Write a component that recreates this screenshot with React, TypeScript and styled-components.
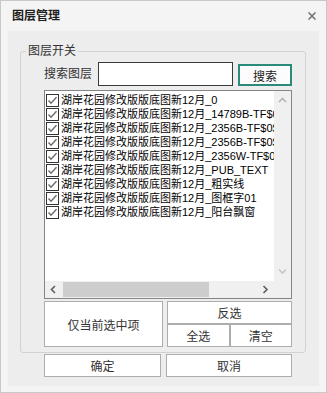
import styled, { createGlobalStyle } from "styled-components";

const GlobalStyle = createGlobalStyle`
  html, body {
    margin: 0;
    padding: 0;
    background: #ffffff;
  }
  body {
    font-family: "Liberation Sans", "Noto Sans CJK SC", sans-serif;
  }
  * {
    box-sizing: border-box;
  }
`;

const PREFIX = "湖岸花园修改版版底图新12月";

const layers = [
  "_0",
  "_14789B-TF$0$0",
  "_2356B-TF$0$1",
  "_2356B-TF$0$2",
  "_2356W-TF$0$3",
  "_PUB_TEXT",
  "_粗实线",
  "_图框字01",
  "_阳台飘窗",
];

const CheckIcon = () => (
  <CheckBox width="13" height="13" viewBox="0 0 13 13">
    <rect x="0.5" y="0.5" width="12" height="12" fill="#fff" stroke="#333" />
    <polyline
      points="2.5,6.5 5,9.2 10.5,3.2"
      fill="none"
      stroke="#6a6a6a"
      strokeWidth="1.4"
    />
  </CheckBox>
);

const Chevron = ({ dir, color }: { dir: "up" | "down" | "left" | "right"; color: string }) => {
  const pts = {
    up: "1,5 4.5,1.5 8,5",
    down: "1,1.5 4.5,5 8,1.5",
    left: "5,1 1.5,4.5 5,8",
    right: "1.5,1 5,4.5 1.5,8",
  }[dir];
  const vertical = dir === "up" || dir === "down";
  return (
    <svg width={vertical ? 9 : 7} height={vertical ? 7 : 9} viewBox={vertical ? "0 0 9 7" : "0 0 7 9"}>
      <polyline points={pts} fill="none" stroke={color} strokeWidth="1.6" />
    </svg>
  );
};

const App = () => {
  return (
    <>
      <GlobalStyle />
      <Window>
        <TitleBar>
          <Title>图层管理</Title>
          <svg width="8" height="8" viewBox="0 0 8 8">
            <path d="M0.5 0.5 L7.5 7.5 M7.5 0.5 L0.5 7.5" stroke="#6f6f6f" strokeWidth="1.5" />
          </svg>
        </TitleBar>
        <Body>
          <GroupBox>
            <Legend>图层开关</Legend>
            <SearchRow>
              <SearchLabel>搜索图层</SearchLabel>
              <SearchInput />
              <SearchButton>搜索</SearchButton>
            </SearchRow>
            <ListBox>
              <Items>
                {layers.map((suffix, i) => (
                  <Item key={i}>
                    <CheckIcon />
                    <ItemText>
                      {PREFIX}
                      {suffix}
                    </ItemText>
                  </Item>
                ))}
              </Items>
              <VScroll>
                <Chevron dir="up" color="#b5b5b5" />
                <Chevron dir="down" color="#c6c6c6" />
              </VScroll>
              <HScroll>
                <ArrowCell>
                  <Chevron dir="left" color="#5e5e5e" />
                </ArrowCell>
                <Track>
                  <Thumb style={{ width: 146 }} />
                </Track>
                <ArrowCell>
                  <Chevron dir="right" color="#5e5e5e" />
                </ArrowCell>
              </HScroll>
              <Corner />
            </ListBox>
            <ActionGrid>
              <Button>仅当前选中项</Button>
              <SelectGrid>
                <Button $span>反选</Button>
                <Button>全选</Button>
                <Button>清空</Button>
              </SelectGrid>
            </ActionGrid>
          </GroupBox>
          <DialogButtons>
            <Button>确定</Button>
            <Button>取消</Button>
          </DialogButtons>
        </Body>
      </Window>
    </>
  );
};

export default App;

const Window = styled.div`
  width: 327px;
  height: 393px;
  border: 1px solid #c8c8c8;
  background: #f4f4f4;
  display: flex;
  flex-direction: column;
`;

const TitleBar = styled.div`
  height: 30px;
  flex-shrink: 0;
  display: flex;
  align-items: center;
  justify-content: space-between;
  padding: 0 10px 0 11px;
`;

const Title = styled.div`
  font-size: 12px;
  font-weight: bold;
  color: #1e1e1e;
  line-height: 14px;
`;

const Body = styled.div`
  flex: 1;
  margin: 0 7px 6px 7px;
  background: #ededed;
  padding: 20px 13px 8px 12px;
  display: flex;
  flex-direction: column;
`;

const GroupBox = styled.div`
  position: relative;
  width: 286px;
  border: 1px solid #d2d2d2;
  border-radius: 3px;
  padding: 10px 13px 5px 23px;
  display: flex;
  flex-direction: column;
`;

const Legend = styled.span`
  position: absolute;
  top: -8px;
  left: 5px;
  padding: 0 2px;
  background: #ededed;
  font-size: 12px;
  line-height: 14px;
  color: #333;
`;

const SearchRow = styled.div`
  height: 24px;
  display: flex;
  align-items: flex-end;
`;

const SearchLabel = styled.span`
  align-self: center;
  width: 48px;
  margin-right: 6px;
  font-size: 12px;
  line-height: 14px;
  color: #333;
  white-space: nowrap;
`;

const SearchInput = styled.input`
  width: 135px;
  height: 24px;
  border: 1px solid #3a3a3a;
  background: #fff;
  outline: none;
  padding: 0 3px;
  font-size: 12px;
`;

const SearchButton = styled.button`
  width: 54px;
  height: 22px;
  margin-left: 5px;
  border: 2px solid #2b8b7a;
  background: #fcfcfc;
  font-family: inherit;
  font-size: 12px;
  color: #222;
  padding: 0;
`;

const ListBox = styled.div`
  margin-top: 4px;
  height: 209px;
  border: 1px solid #858585;
  background: #fff;
  display: grid;
  grid-template-columns: 1fr 17px;
  grid-template-rows: 1fr 17px;
  overflow: hidden;
`;

const Items = styled.div`
  overflow: hidden;
  min-width: 0;
  padding: 2px 0 0 1px;
  display: flex;
  flex-direction: column;
`;

const Item = styled.div`
  height: 14px;
  display: flex;
  align-items: center;
  gap: 2px;
  white-space: nowrap;
`;

const CheckBox = styled.svg`
  flex-shrink: 0;
`;

const ItemText = styled.span`
  flex-shrink: 0;
  font-size: 11px;
  line-height: 14px;
  color: #000;
`;

const VScroll = styled.div`
  background: #f0f0f0;
  display: flex;
  flex-direction: column;
  align-items: center;
  justify-content: space-between;
  padding: 6px 0;
`;

const HScroll = styled.div`
  background: #f0f0f0;
  display: flex;
  align-items: center;
`;

const ArrowCell = styled.div`
  width: 17px;
  height: 17px;
  flex-shrink: 0;
  display: flex;
  align-items: center;
  justify-content: center;
`;

const Track = styled.div`
  flex: 1;
  height: 15px;
  padding-left: 1px;
`;

const Thumb = styled.div`
  height: 15px;
  background: #cdcdcd;
`;

const Corner = styled.div`
  background: #f0f0f0;
`;

const ActionGrid = styled.div`
  margin-top: 2px;
  height: 46px;
  display: grid;
  grid-template-columns: 119px 1fr;
  gap: 4px;
`;

const SelectGrid = styled.div`
  display: grid;
  grid-template-columns: 1fr 1fr;
  grid-template-rows: 23px 23px;
`;

const Button = styled.button<{ $span?: boolean }>`
  grid-column: ${({ $span }) => ($span ? "1 / span 2" : "auto")};
  border: 1px solid #adadad;
  background: #ffffff;
  font-family: "Liberation Sans", "Noto Sans CJK SC", sans-serif;
  font-size: 12px;
  color: #333;
  padding: 0;
  margin: 0;
`;

const DialogButtons = styled.div`
  margin: 1px 0 0 24px;
  width: 248px;
  height: 23px;
  display: grid;
  grid-template-columns: 117px 1fr;
  gap: 5px;
`;
